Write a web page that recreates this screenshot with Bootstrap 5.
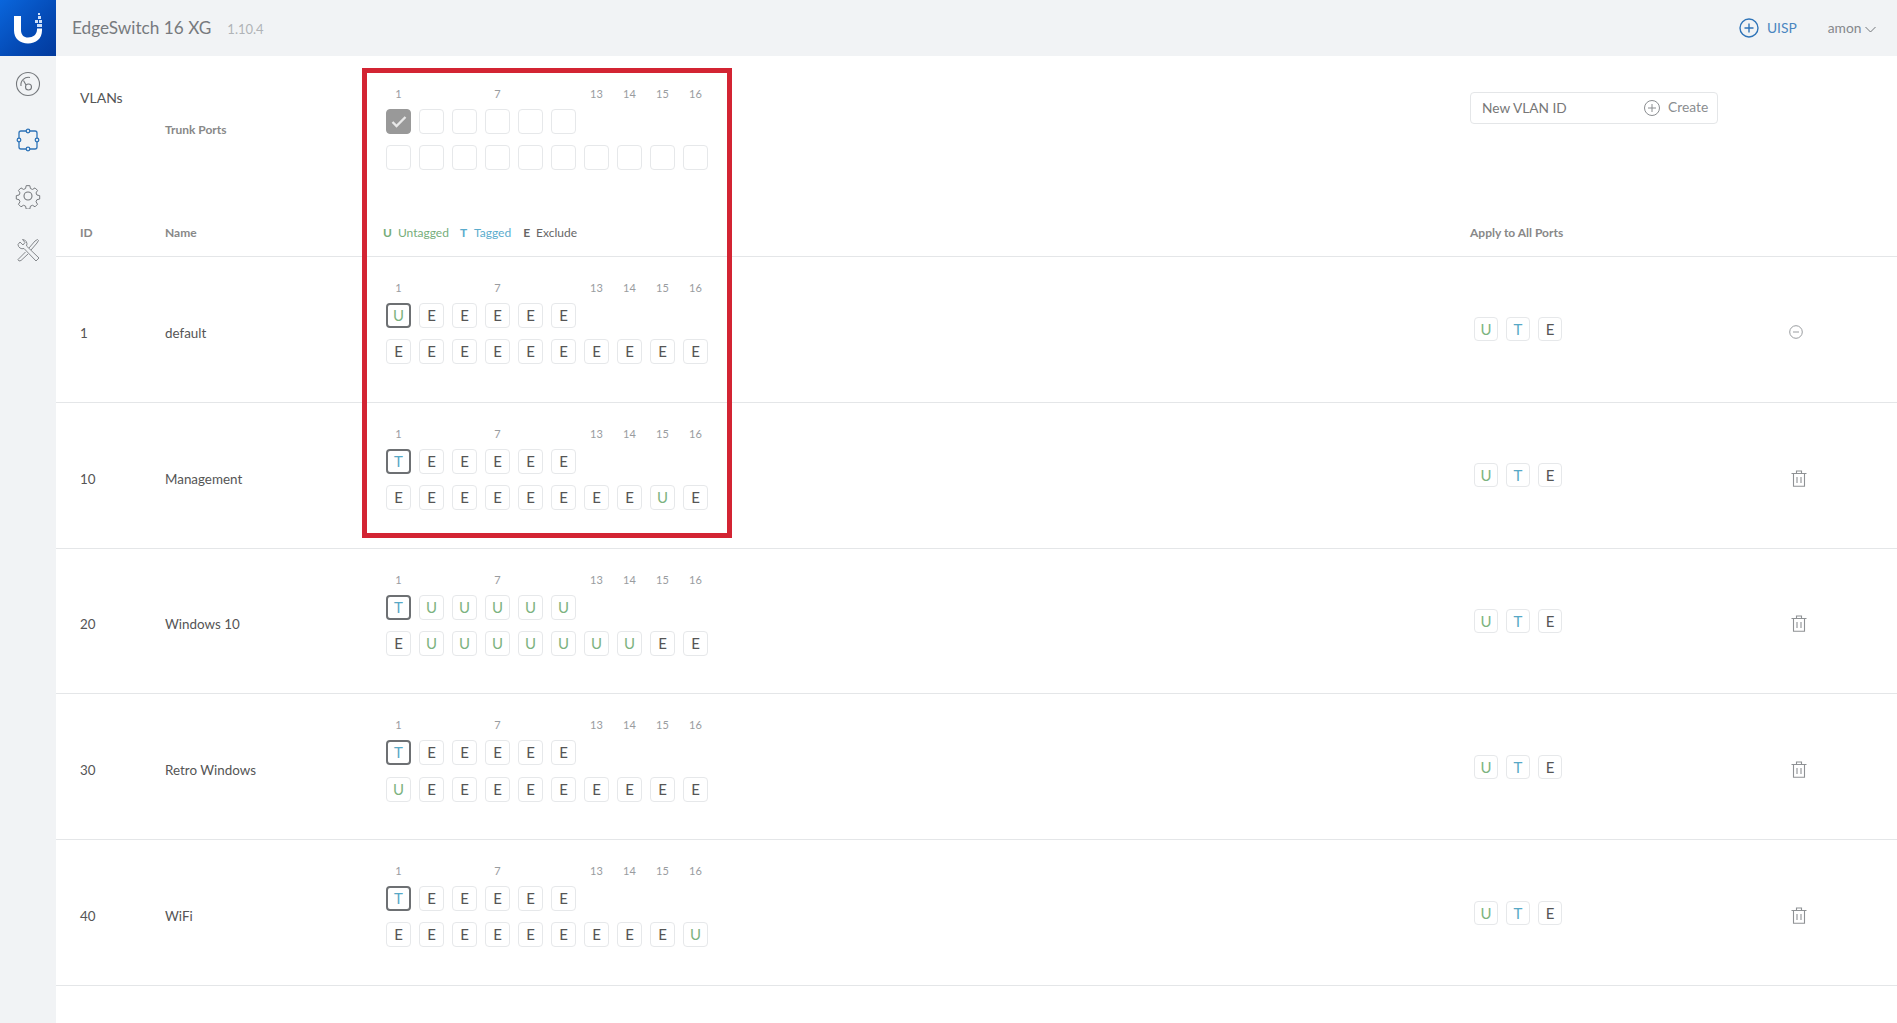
<!DOCTYPE html>
<html lang="en">
<head>
<meta charset="utf-8">
<title>EdgeSwitch 16 XG</title>
<link rel="stylesheet" href="https://cdn.jsdelivr.net/npm/bootstrap@5.3.0/dist/css/bootstrap.min.css">
<style>
html,body{height:100%;margin:0;overflow:hidden;background:#fff}
body{font-family:Lato,"Liberation Sans",sans-serif;font-size:14px;color:#555}
.top-bar{height:56px;background:#f1f3f5}
.logo-box{width:56px;height:56px;background:linear-gradient(135deg,#0a66dc 0%,#0449b4 60%,#033a9c 100%)}
.app-title{margin-left:16px;font-size:17.2px;color:#777a7e}
.app-ver{margin-left:16px;margin-top:3px;font-size:13px;color:#b0b3b7}
.uisp-link{color:#4a86c0;font-size:13.800px}
.user-link{color:#85888c;font-size:13.800px;margin-left:31px;margin-right:21px}
.side-rail{width:56px;background:#f1f3f5;padding-top:15px}
.rail-slot{height:56px}
.rail-slot.tools{margin-top:-2px}
.page-area{position:relative}
.mark-box{position:absolute;left:306px;top:12px;width:370px;height:470px;border:5px solid #d32433;pointer-events:none}
.head-block{height:201px;border-bottom:1px solid #e4e6e8}
.cname{width:221px;flex:none}
.cports{width:1084px;flex:none}
.top-line{height:144px}
.vlans-t{width:109px;padding-top:31px;font-size:14px;color:#555}
.trunk-t{width:221px;padding-top:65px;font-size:12px;font-weight:700;color:#888}
.th-line{height:32px;margin-top:17px;font-size:12px;font-weight:700;color:#888}
.th-id{width:109px}.th-name{width:218px}.th-legend{width:1087px}
.legend-i{font-size:12px;font-weight:400}
.legend-i b{margin-right:6px}
.legend-i.lu{margin-right:11px}.legend-i.lt{margin-right:12px}
.legend-i.lt b{margin-right:7px}
.lu{color:#76ad7a}.lt{color:#5aaccd}.le{color:#666}
.port-labels{height:16px;margin-bottom:7px;font-size:11px;color:#999c9f;line-height:15px}
.port-line{height:25px;margin-bottom:11.300px}
.lbl,.pc{width:25px;margin-right:8px;flex:none;text-align:center}
.pc{height:25px;line-height:23px;border:1px solid #e6e8ea;border-radius:4px;font-size:15px;background:#fff}
.pc.u{color:#7cb380}.pc.t{color:#57a8c6}.pc.e{color:#555}
.pc.pvid{border:2px solid #6d7073;line-height:21px}
.pc.on{background:#999;border-color:#999;line-height:0}
.top-ports{padding-top:30px}
.vrow{height:145.8px;border-bottom:1px solid #e4e6e8}
.vid{width:109px;flex:none;align-self:center;padding-top:7px;font-size:13.400px}
.vrow .cname{padding-top:7px;align-self:center;font-size:13.400px;color:#555}
.vrow .cports{padding-top:23px;height:100%}
.apply-box{padding-left:4px;width:308px}
.apply-box .pc{width:24px;height:24px;line-height:22px}
.act-i{width:48px;padding-left:11px;padding-top:2px}
.act-i.del{padding-left:13px}
.vlan-new{width:248px;height:32px;border:1px solid #e4e6e8;border-radius:4px;padding:0 10px 0 11px;margin-top:36px}
.vlan-new input{border:0;outline:0;background:transparent;width:162px;flex:none;font-size:13.700px;color:#666;padding:0}
.vlan-new input::placeholder{color:#777;opacity:1}
.vlan-new svg{flex:none}
.create-t{color:#8a8d90;font-size:13.800px;margin-top:-2px}
.apply-col{width:320px}
</style>
</head>
<body>
<header class="top-bar d-flex align-items-center">
  <div class="logo-box d-flex align-items-center justify-content-center flex-shrink-0">
    <svg width="56" height="56" viewBox="0 0 56 56"><path d="M14 16h7v14c0 5 3 7.500 7 7.500 5 0 9-3 9-8v-1h5v2c0 8-6 13-14 13s-14-5-14-13z" fill="#fff"/><path d="M38 16h3v3h-3zM35 20h3v3h-3zM39 20h3v3h-3zM37 24h5v3h-5zM38 13h2v2h-2z" fill="#cfe0f8"/></svg>
  </div>
  <span class="app-title">EdgeSwitch 16 XG</span><span class="app-ver">1.10.4</span>
  <div class="ms-auto d-flex align-items-center">
    <svg class="me-2" width="20" height="20" viewBox="0 0 20 20" fill="none" stroke="#2f74b8" stroke-width="1.400"><circle cx="10" cy="10" r="9"/><path d="M10 5.500v9M5.500 10h9"/></svg>
    <span class="uisp-link">UISP</span>
    <span class="user-link">amon <svg width="11" height="7" viewBox="0 0 11 7" fill="none" stroke="#72767a"><path d="M.5 1l5 5 5-5"/></svg></span>
  </div>
</header>
<div class="d-flex" style="height:967px">
  <nav class="side-rail flex-shrink-0">
    <div class="rail-slot d-flex justify-content-center">
      <svg width="26" height="26" viewBox="0 0 26 26" fill="none" stroke="#75787c" stroke-width="1.100"><circle cx="13" cy="13" r="11.500"/><path d="M6 15a7.500 7.500 0 0 1 9-8.500"/><circle cx="13.500" cy="16" r="3"/><path d="M11 14L8.500 9.500"/></svg>
    </div>
    <div class="rail-slot d-flex justify-content-center">
      <svg width="26" height="26" viewBox="0 0 26 26" fill="none" stroke="#2f74b8" stroke-width="1.300"><rect x="4" y="4" width="18" height="18" rx="2"/><g fill="#f1f3f5"><circle cx="13" cy="4" r="1.800"/><circle cx="13" cy="22" r="1.800"/><circle cx="4" cy="13" r="1.800"/><circle cx="22" cy="13" r="1.800"/></g></svg>
    </div>
    <div class="rail-slot d-flex justify-content-center">
      <svg width="26" height="26" viewBox="0 0 26 26" fill="none" stroke="#75787c" stroke-width="1.100"><circle cx="13" cy="13" r="4"/><path d="M11 1.500h4l.7 3.200 2.300 1 2.800-1.700 2.800 2.800-1.700 2.800 1 2.300 3.100.7v3.800l-3.100.7-1 2.300 1.700 2.800-2.800 2.800-2.800-1.700-2.300 1-.7 3.200h-4l-.7-3.200-2.300-1-2.800 1.700-2.800-2.800 1.700-2.800-1-2.300-3.100-.7v-3.800l3.100-.7 1-2.300-1.700-2.800 2.800-2.800 2.800 1.700 2.300-1z" transform="translate(1.300 1.300) scale(.9)"/></svg>
    </div>
    <div class="rail-slot tools d-flex justify-content-center">
      <svg width="26" height="26" viewBox="0 0 26 26" fill="none" stroke="#85888c" stroke-width="1"><path d="M3 7.500a4.500 4.500 0 0 0 6 4l12 12.500 3-3L11.500 9a4.500 4.500 0 0 0-4-6.500L10 5.500 8 8 5 5z"/><path d="M14 11l6-7 2.500-1.500 1 1L22 6l-6 7M10.500 15L3 22.500l1 1.500 2-.5 7-6.500"/></svg>
    </div>
  </nav>
  <main class="page-area flex-grow-1">
    <div class="mark-box"></div>
    <section class="head-block">
      <div class="top-line d-flex">
        <div class="vlans-t ps-4">VLANs</div>
        <div class="trunk-t">Trunk Ports</div>
        <div class="cports top-ports">
          <div class="port-labels d-flex"><span class="lbl">1</span><span class="lbl"></span><span class="lbl"></span><span class="lbl">7</span><span class="lbl"></span><span class="lbl"></span><span class="lbl">13</span><span class="lbl">14</span><span class="lbl">15</span><span class="lbl">16</span></div>
          <div class="port-line d-flex"><span class="pc on d-flex align-items-center justify-content-center"><svg width="16" height="13" viewBox="0 0 16 13" fill="none" stroke="#e8e8e8" stroke-width="2.400"><path d="M1.500 7l4 4L14.500 2"/></svg></span><span class="pc"></span><span class="pc"></span><span class="pc"></span><span class="pc"></span><span class="pc"></span></div>
          <div class="port-line d-flex"><span class="pc"></span><span class="pc"></span><span class="pc"></span><span class="pc"></span><span class="pc"></span><span class="pc"></span><span class="pc"></span><span class="pc"></span><span class="pc"></span><span class="pc"></span></div>
        </div>
        <div class="apply-col">
          <div class="vlan-new d-flex align-items-center">
            <input type="text" placeholder="New VLAN ID" aria-label="New VLAN ID">
            <svg class="me-2" width="16" height="16" viewBox="0 0 16 16" fill="none" stroke="#8a8d90"><circle cx="8" cy="8" r="7.500"/><path d="M8 4v8M4 8h8"/></svg>
            <span class="create-t">Create</span>
          </div>
        </div>
      </div>
      <div class="th-line d-flex align-items-center">
        <div class="th-id ps-4">ID</div>
        <div class="th-name">Name</div>
        <div class="th-legend d-flex">
          <span class="legend-i lu"><b>U</b>Untagged</span><span class="legend-i lt"><b>T</b>Tagged</span><span class="legend-i le"><b>E</b>Exclude</span>
        </div>
        <div>Apply to All Ports</div>
      </div>
    </section>

    <section class="vrow d-flex">
      <div class="vid ps-4">1</div>
      <div class="cname">default</div>
      <div class="cports">
        <div class="port-labels d-flex"><span class="lbl">1</span><span class="lbl"></span><span class="lbl"></span><span class="lbl">7</span><span class="lbl"></span><span class="lbl"></span><span class="lbl">13</span><span class="lbl">14</span><span class="lbl">15</span><span class="lbl">16</span></div>
        <div class="port-line d-flex"><span class="pc u pvid">U</span><span class="pc e">E</span><span class="pc e">E</span><span class="pc e">E</span><span class="pc e">E</span><span class="pc e">E</span></div>
        <div class="port-line d-flex"><span class="pc e">E</span><span class="pc e">E</span><span class="pc e">E</span><span class="pc e">E</span><span class="pc e">E</span><span class="pc e">E</span><span class="pc e">E</span><span class="pc e">E</span><span class="pc e">E</span><span class="pc e">E</span></div>
      </div>
      <div class="apply-box d-flex align-items-center"><span class="pc u">U</span><span class="pc t">T</span><span class="pc e">E</span></div>
      <div class="act-i align-self-center"><svg width="14" height="14" viewBox="0 0 14 14" fill="none" stroke="#9a9da0"><circle cx="7" cy="7" r="6.300"/><path d="M4 7h6"/></svg></div>
    </section>

    <section class="vrow d-flex">
      <div class="vid ps-4">10</div>
      <div class="cname">Management</div>
      <div class="cports">
        <div class="port-labels d-flex"><span class="lbl">1</span><span class="lbl"></span><span class="lbl"></span><span class="lbl">7</span><span class="lbl"></span><span class="lbl"></span><span class="lbl">13</span><span class="lbl">14</span><span class="lbl">15</span><span class="lbl">16</span></div>
        <div class="port-line d-flex"><span class="pc t pvid">T</span><span class="pc e">E</span><span class="pc e">E</span><span class="pc e">E</span><span class="pc e">E</span><span class="pc e">E</span></div>
        <div class="port-line d-flex"><span class="pc e">E</span><span class="pc e">E</span><span class="pc e">E</span><span class="pc e">E</span><span class="pc e">E</span><span class="pc e">E</span><span class="pc e">E</span><span class="pc e">E</span><span class="pc u">U</span><span class="pc e">E</span></div>
      </div>
      <div class="apply-box d-flex align-items-center"><span class="pc u">U</span><span class="pc t">T</span><span class="pc e">E</span></div>
      <div class="act-i del align-self-center"><svg width="16" height="17" viewBox="0 0 16 17" fill="none" stroke="#8e9194" stroke-width="1.100"><path d="M.5 3.500h15M5.500 3.500V1h5v2.500M2.500 3.500v12.700h11V3.500M6 7v6M10 7v6"/></svg></div>
    </section>

    <section class="vrow d-flex">
      <div class="vid ps-4">20</div>
      <div class="cname">Windows 10</div>
      <div class="cports">
        <div class="port-labels d-flex"><span class="lbl">1</span><span class="lbl"></span><span class="lbl"></span><span class="lbl">7</span><span class="lbl"></span><span class="lbl"></span><span class="lbl">13</span><span class="lbl">14</span><span class="lbl">15</span><span class="lbl">16</span></div>
        <div class="port-line d-flex"><span class="pc t pvid">T</span><span class="pc u">U</span><span class="pc u">U</span><span class="pc u">U</span><span class="pc u">U</span><span class="pc u">U</span></div>
        <div class="port-line d-flex"><span class="pc e">E</span><span class="pc u">U</span><span class="pc u">U</span><span class="pc u">U</span><span class="pc u">U</span><span class="pc u">U</span><span class="pc u">U</span><span class="pc u">U</span><span class="pc e">E</span><span class="pc e">E</span></div>
      </div>
      <div class="apply-box d-flex align-items-center"><span class="pc u">U</span><span class="pc t">T</span><span class="pc e">E</span></div>
      <div class="act-i del align-self-center"><svg width="16" height="17" viewBox="0 0 16 17" fill="none" stroke="#8e9194" stroke-width="1.100"><path d="M.5 3.500h15M5.500 3.500V1h5v2.500M2.500 3.500v12.700h11V3.500M6 7v6M10 7v6"/></svg></div>
    </section>

    <section class="vrow d-flex">
      <div class="vid ps-4">30</div>
      <div class="cname">Retro Windows</div>
      <div class="cports">
        <div class="port-labels d-flex"><span class="lbl">1</span><span class="lbl"></span><span class="lbl"></span><span class="lbl">7</span><span class="lbl"></span><span class="lbl"></span><span class="lbl">13</span><span class="lbl">14</span><span class="lbl">15</span><span class="lbl">16</span></div>
        <div class="port-line d-flex"><span class="pc t pvid">T</span><span class="pc e">E</span><span class="pc e">E</span><span class="pc e">E</span><span class="pc e">E</span><span class="pc e">E</span></div>
        <div class="port-line d-flex"><span class="pc u">U</span><span class="pc e">E</span><span class="pc e">E</span><span class="pc e">E</span><span class="pc e">E</span><span class="pc e">E</span><span class="pc e">E</span><span class="pc e">E</span><span class="pc e">E</span><span class="pc e">E</span></div>
      </div>
      <div class="apply-box d-flex align-items-center"><span class="pc u">U</span><span class="pc t">T</span><span class="pc e">E</span></div>
      <div class="act-i del align-self-center"><svg width="16" height="17" viewBox="0 0 16 17" fill="none" stroke="#8e9194" stroke-width="1.100"><path d="M.5 3.500h15M5.500 3.500V1h5v2.500M2.500 3.500v12.700h11V3.500M6 7v6M10 7v6"/></svg></div>
    </section>

    <section class="vrow d-flex">
      <div class="vid ps-4">40</div>
      <div class="cname">WiFi</div>
      <div class="cports">
        <div class="port-labels d-flex"><span class="lbl">1</span><span class="lbl"></span><span class="lbl"></span><span class="lbl">7</span><span class="lbl"></span><span class="lbl"></span><span class="lbl">13</span><span class="lbl">14</span><span class="lbl">15</span><span class="lbl">16</span></div>
        <div class="port-line d-flex"><span class="pc t pvid">T</span><span class="pc e">E</span><span class="pc e">E</span><span class="pc e">E</span><span class="pc e">E</span><span class="pc e">E</span></div>
        <div class="port-line d-flex"><span class="pc e">E</span><span class="pc e">E</span><span class="pc e">E</span><span class="pc e">E</span><span class="pc e">E</span><span class="pc e">E</span><span class="pc e">E</span><span class="pc e">E</span><span class="pc e">E</span><span class="pc u">U</span></div>
      </div>
      <div class="apply-box d-flex align-items-center"><span class="pc u">U</span><span class="pc t">T</span><span class="pc e">E</span></div>
      <div class="act-i del align-self-center"><svg width="16" height="17" viewBox="0 0 16 17" fill="none" stroke="#8e9194" stroke-width="1.100"><path d="M.5 3.500h15M5.500 3.500V1h5v2.500M2.500 3.500v12.700h11V3.500M6 7v6M10 7v6"/></svg></div>
    </section>
  </main>
</div>
<script src="https://cdn.jsdelivr.net/npm/bootstrap@5.3.0/dist/js/bootstrap.bundle.min.js"></script>
</body>
</html>
